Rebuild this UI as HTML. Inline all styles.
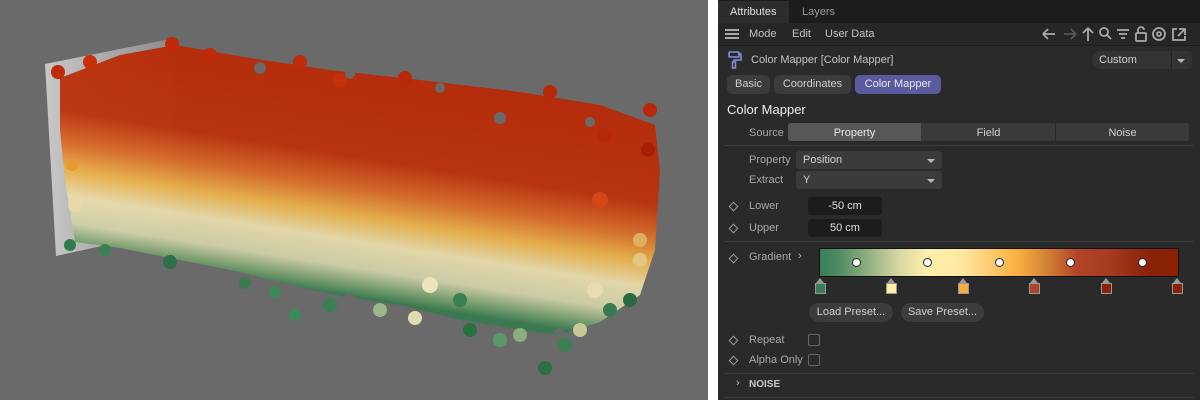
<!DOCTYPE html>
<html><head><meta charset="utf-8"><style>
*{margin:0;padding:0;box-sizing:border-box}
body{width:1200px;height:400px;overflow:hidden;background:#fff;font-family:"Liberation Sans",sans-serif;font-size:11px;color:#c4c4c4;position:relative}
.a{position:absolute}
#vp{left:0;top:0;width:708px;height:400px;background:#6a6a6a}
#pn{left:718px;top:0;width:482px;height:400px;background:#2a2a2a}
.t{position:absolute;white-space:nowrap;line-height:14px}
.dia{position:absolute;width:7px;height:7px;border:1.3px solid #9a9a9a;transform:rotate(45deg)}
.line{position:absolute;left:6px;right:6px;height:1px;background:#3a3a3a}
.btn{position:absolute;background:#3c3c3c;border-radius:5px;text-align:center;height:19px;line-height:19px;color:#d0d0d0}
.dd{position:absolute;background:#3b3b3b;border-radius:3px;height:18px;line-height:18px;padding-left:7px;color:#d0d0d0}
.dd:after{content:"";position:absolute;right:7px;top:8px;border:4px solid transparent;border-top:4px solid #bbb;border-bottom:0}
.fld{position:absolute;background:#1c1c1c;border-radius:3px;height:18px;line-height:18px;text-align:center;color:#e0e0e0}
.cb{position:absolute;width:12px;height:12px;border:1.5px solid #666;border-radius:2px}
.mk{position:absolute;width:11px;height:16px}
.mk i{position:absolute;left:1px;top:0;border:4.5px solid transparent;border-bottom:5px solid #999;border-top:0}
.mk b{position:absolute;left:0;top:5px;width:11px;height:11px;border:1.5px solid #999;background:#000}
.dot{position:absolute;width:9px;height:9px;border-radius:50%;background:#fff;border:1.5px solid #222}
</style></head><body>
<div id="vp" class="a">
<svg width="708" height="400" viewBox="0 0 708 400">
<defs>
<linearGradient id="g" gradientUnits="userSpaceOnUse" x1="0" y1="0" x2="-37" y2="235">
<stop offset="0" stop-color="#b82806"/><stop offset="0.42" stop-color="#bc320c"/>
<stop offset="0.55" stop-color="#d86a28"/><stop offset="0.66" stop-color="#eab048"/>
<stop offset="0.77" stop-color="#e8dcac"/><stop offset="0.88" stop-color="#d0d0a8"/><stop offset="0.95" stop-color="#7aa070"/><stop offset="1" stop-color="#3a7a50"/></linearGradient>
<linearGradient id="w" x1="0" y1="0" x2="1" y2="0"><stop offset="0" stop-color="#c8c8c8"/><stop offset="1" stop-color="#8a8a8a"/></linearGradient>
</defs>
<polygon points="45,64 175,38 175,230 56,256" fill="url(#w)"/>
<path d="M60,78 L120,55 L175,45 L250,58 L330,70 L420,80 L520,92 L600,105 L655,125 L660,170 L655,250 L640,295 L600,322 L560,335 L520,330 L460,320 L400,305 L340,296 L290,285 L240,272 L180,260 L120,248 L75,242 L65,180 L60,130 Z" fill="url(#g)" opacity="0.95"/>
<g fill="#6a6a6a">
<circle cx="500" cy="118" r="6"/><circle cx="590" cy="122" r="5"/><circle cx="260" cy="68" r="6"/><circle cx="440" cy="88" r="5"/><circle cx="350" cy="74" r="5"/><circle cx="655" cy="275" r="6"/><circle cx="350" cy="298" r="5"/><circle cx="560" cy="333" r="5"/>
</g>
<g>
<circle cx="58" cy="72" r="7" fill="#c02a08"/><circle cx="90" cy="62" r="7" fill="#c8300a"/><circle cx="172" cy="44" r="7" fill="#c02a08"/><circle cx="210" cy="55" r="7" fill="#c02a08"/><circle cx="300" cy="62" r="7" fill="#c02a08"/><circle cx="340" cy="80" r="7" fill="#c63008"/><circle cx="405" cy="78" r="7" fill="#b82808"/><circle cx="550" cy="92" r="7" fill="#b82808"/><circle cx="605" cy="135" r="7" fill="#b82808"/><circle cx="648" cy="150" r="7" fill="#a82008"/><circle cx="650" cy="110" r="7" fill="#b82808"/>
<circle cx="72" cy="165" r="6" fill="#e89a30"/><circle cx="75" cy="205" r="7" fill="#e8d8a8"/><circle cx="640" cy="240" r="7" fill="#e0b060"/><circle cx="640" cy="260" r="7" fill="#e0c880"/>
<circle cx="70" cy="245" r="6" fill="#2f7a4e"/><circle cx="105" cy="250" r="6" fill="#3a8050"/><circle cx="170" cy="262" r="7" fill="#2e7048"/><circle cx="245" cy="283" r="6" fill="#3a7a50"/><circle cx="275" cy="292" r="6" fill="#3c8a5a"/><circle cx="295" cy="315" r="6" fill="#3c8a5a"/><circle cx="330" cy="305" r="7" fill="#3a8050"/><circle cx="380" cy="310" r="7" fill="#9ab888"/><circle cx="415" cy="318" r="7" fill="#e0dcb0"/><circle cx="460" cy="300" r="7" fill="#3a8050"/><circle cx="470" cy="330" r="7" fill="#2a7040"/><circle cx="500" cy="340" r="7" fill="#5a9868"/><circle cx="520" cy="335" r="7" fill="#8ab080"/><circle cx="545" cy="368" r="7" fill="#2a7040"/><circle cx="565" cy="345" r="7" fill="#3a8050"/><circle cx="580" cy="330" r="7" fill="#c8c898"/><circle cx="610" cy="310" r="7" fill="#3a7a50"/><circle cx="630" cy="300" r="7" fill="#2a6a40"/><circle cx="595" cy="290" r="8" fill="#e8dcb0"/>
<circle cx="430" cy="285" r="8" fill="#ede4bc"/><circle cx="600" cy="200" r="8" fill="#d04818"/>
</g>
</svg>
</div>
<div id="pn" class="a">
<div class="a" style="left:0;top:0;width:482px;height:23px;background:#1c1c1c"></div>
<div class="a" style="left:0;top:1px;width:71px;height:22px;background:#2d2d2d"></div>
<div class="t" style="left:12px;top:5px;color:#e0e0e0">Attributes</div>
<div class="t" style="left:84px;top:5px;color:#9a9a9a">Layers</div>
<div class="a" style="left:0;top:23px;width:482px;height:22px;background:#262626"></div>
<div class="a" style="left:7px;top:29px;width:14px;height:2px;background:#aaa;box-shadow:0 4px 0 #aaa,0 8px 0 #aaa"></div>
<div class="t" style="left:31px;top:27px">Mode</div>
<div class="t" style="left:74px;top:27px">Edit</div>
<div class="t" style="left:107px;top:27px">User Data</div>
<svg class="a" style="left:322px;top:25px" width="160" height="18" viewBox="0 0 160 18" fill="none" stroke="#aaa" stroke-width="1.8">
<path d="M3,9 H15 M3,9 L8,4 M3,9 L8,14"/><path d="M24,9 H36 M36,9 L31,4 M36,9 L31,14" stroke="#555"/>
<path d="M48,16 V3 M48,3 L43,8 M48,3 L53,8"/>
<circle cx="64" cy="7" r="4"/><path d="M67,10 L71,14"/>
<path d="M77,5 H89 M79,9 H87 M81,13 H85"/>
<rect x="96" y="8" width="10" height="8" rx="1"/><path d="M98,8 V5 a3,3 0 0 1 6,0"/>
<circle cx="119" cy="9" r="6"/><circle cx="119" cy="9" r="2"/>
<path d="M137,4 H133 V15 H145 V11 M139,4 H145 V10 M145,4 L138,11"/>
</svg>
<div class="a" style="left:0;top:45px;width:482px;height:1px;background:#1c1c1c"></div>
<svg class="a" style="left:10px;top:51px" width="14" height="18" viewBox="0 0 14 18" fill="none" stroke="#8a8ad8" stroke-width="1.6"><rect x="1" y="1" width="10" height="5" rx="1"/><path d="M11,3 H13 V9 H6 V11"/><rect x="4.5" y="11" width="3" height="6"/></svg>
<div class="t" style="left:33px;top:53px">Color Mapper [Color Mapper]</div>
<div class="a" style="left:374px;top:51px;width:100px;height:18px;background:#333;border-radius:9px 3px 3px 9px"></div>
<div class="a" style="left:453px;top:51px;width:1px;height:18px;background:#222"></div>
<div class="t" style="left:381px;top:53px;color:#d0d0d0">Custom</div>
<div class="a" style="left:459px;top:59px;border:4px solid transparent;border-top:4px solid #bbb;border-bottom:0"></div>
<div class="btn" style="left:9px;top:75px;width:43px">Basic</div>
<div class="btn" style="left:56px;top:75px;width:77px">Coordinates</div>
<div class="btn" style="left:137px;top:75px;width:86px;background:#5b5a9e;color:#e8e8f4">Color Mapper</div>
<div class="t" style="left:9px;top:103px;color:#f0f0f0;font-size:13px">Color Mapper</div>
<div class="t" style="left:31px;top:126px;color:#a8a8a8">Source</div>
<div class="a" style="left:70px;top:123px;width:401px;height:18px;background:#3a3a3a;border-radius:3px"></div>
<div class="a" style="left:70px;top:123px;width:133px;height:18px;background:#575757;border-radius:3px 0 0 3px"></div>
<div class="a" style="left:337px;top:123px;width:1px;height:18px;background:#2a2a2a"></div>
<div class="t" style="left:70px;top:126px;width:133px;text-align:center;color:#e8e8e8">Property</div>
<div class="t" style="left:204px;top:126px;width:133px;text-align:center;color:#d0d0d0">Field</div>
<div class="t" style="left:338px;top:126px;width:133px;text-align:center;color:#d0d0d0">Noise</div>
<div class="line" style="top:145px"></div>
<div class="t" style="left:31px;top:153px;color:#a8a8a8">Property</div>
<div class="dd" style="left:78px;top:151px;width:146px">Position</div>
<div class="t" style="left:31px;top:173px;color:#a8a8a8">Extract</div>
<div class="dd" style="left:78px;top:171px;width:146px">Y</div>
<div class="dia" style="left:12px;top:203px"></div>
<div class="t" style="left:31px;top:199px;color:#a8a8a8">Lower</div>
<div class="fld" style="left:90px;top:197px;width:74px">-50 cm</div>
<div class="dia" style="left:12px;top:225px"></div>
<div class="t" style="left:31px;top:221px;color:#a8a8a8">Upper</div>
<div class="fld" style="left:90px;top:219px;width:74px">50 cm</div>
<div class="line" style="top:241px"></div>
<div class="dia" style="left:12px;top:255px"></div>
<div class="t" style="left:31px;top:250px;color:#a8a8a8">Gradient</div>
<div class="t" style="left:80px;top:249px;color:#bbb">›</div>
<div class="a" style="left:101px;top:248px;width:360px;height:29px;border:1px solid #111;background:linear-gradient(90deg,#3a7e5a 0%,#4e8a62 5%,#d6d6a0 22%,#fff1aa 30%,#fde7a0 40%,#fbb040 55%,#d88a38 62%,#b04426 72%,#a83c22 80%,#8a2208 92%,#8a2200 100%)"></div>
<div class="dot" style="left:134px;top:258px"></div><div class="dot" style="left:205px;top:258px"></div><div class="dot" style="left:277px;top:258px"></div><div class="dot" style="left:348px;top:258px"></div><div class="dot" style="left:420px;top:258px"></div>
<div class="mk" style="left:97px;top:278px"><i></i><b style="background:#3d7d5c"></b></div>
<div class="mk" style="left:168px;top:278px"><i></i><b style="background:#fff0a4"></b></div>
<div class="mk" style="left:240px;top:278px"><i></i><b style="background:#f8ae3c"></b></div>
<div class="mk" style="left:311px;top:278px"><i></i><b style="background:#ae4428"></b></div>
<div class="mk" style="left:383px;top:278px"><i></i><b style="background:#8a2206"></b></div>
<div class="mk" style="left:454px;top:278px"><i></i><b style="background:#8a2206"></b></div>
<div class="btn" style="left:91px;top:303px;width:84px;border-radius:10px">Load Preset...</div>
<div class="btn" style="left:183px;top:303px;width:83px;border-radius:10px">Save Preset...</div>
<div class="dia" style="left:12px;top:337px"></div>
<div class="t" style="left:31px;top:333px;color:#a8a8a8">Repeat</div>
<div class="cb" style="left:90px;top:334px"></div>
<div class="dia" style="left:12px;top:357px"></div>
<div class="t" style="left:31px;top:353px;color:#a8a8a8">Alpha Only</div>
<div class="cb" style="left:90px;top:354px"></div>
<div class="line" style="top:373px"></div>
<div class="t" style="left:18px;top:376px;color:#bbb">›</div>
<div class="t" style="left:31px;top:378px;font-weight:bold;font-size:10px;color:#c8c8c8">NOISE</div>
<div class="line" style="top:397px"></div>
</div>
</body></html>
